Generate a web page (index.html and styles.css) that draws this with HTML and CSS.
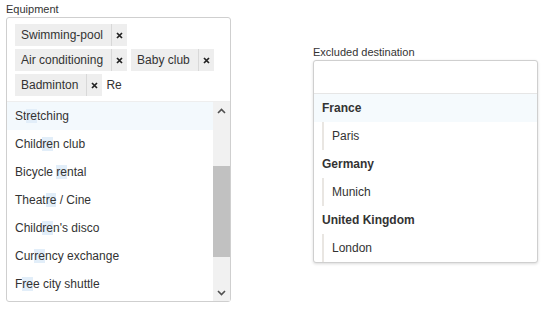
FILE: index.html
```html
<!DOCTYPE html>
<html lang="en">
<head>
    <meta charset="UTF-8">
    <title>Select widgets</title>
    <link rel="stylesheet" href="styles.css">
</head>
<body>
    <div class="field">
        <label class="field-label">Equipment</label>
        <div class="select-box">
            <div class="tags">
                <span class="tag"><span class="tag-text">Swimming-pool</span><span class="tag-remove"><svg width="7" height="7" viewBox="0 0 7 7"><path d="M1 1L6 6M6 1L1 6"/></svg></span></span>
                <span class="tag"><span class="tag-text">Air conditioning</span><span class="tag-remove"><svg width="7" height="7" viewBox="0 0 7 7"><path d="M1 1L6 6M6 1L1 6"/></svg></span></span>
                <span class="tag"><span class="tag-text">Baby club</span><span class="tag-remove"><svg width="7" height="7" viewBox="0 0 7 7"><path d="M1 1L6 6M6 1L1 6"/></svg></span></span>
                <span class="tag"><span class="tag-text">Badminton</span><span class="tag-remove"><svg width="7" height="7" viewBox="0 0 7 7"><path d="M1 1L6 6M6 1L1 6"/></svg></span></span>
                <span class="search-text">Re</span>
            </div>
            <div class="dropdown">
                <ul class="options">
                    <li class="option active">St<mark>re</mark>tching</li>
                    <li class="option">Child<mark>re</mark>n club</li>
                    <li class="option">Bicycle <mark>re</mark>ntal</li>
                    <li class="option">Theat<mark>re</mark> / Cine</li>
                    <li class="option">Child<mark>re</mark>n's disco</li>
                    <li class="option">Cur<mark>re</mark>ncy exchange</li>
                    <li class="option">F<mark>re</mark>e city shuttle</li>
                </ul>
                <div class="scrollbar">
                    <div class="scroll-btn"><svg width="9" height="6" viewBox="0 0 9 6"><path d="M1 5L4.5 1.5L8 5"/></svg></div>
                    <div class="scroll-track"><div class="scroll-thumb"></div></div>
                    <div class="scroll-btn"><svg width="9" height="6" viewBox="0 0 9 6"><path d="M1 1L4.5 4.5L8 1"/></svg></div>
                </div>
            </div>
        </div>
    </div>

    <div class="field field-right">
        <label class="field-label">Excluded destination</label>
        <div class="select-box select-open">
            <div class="search-input"></div>
            <ul class="groups">
                <li class="group-title active">France</li>
                <li class="group-item">Paris</li>
                <li class="group-title">Germany</li>
                <li class="group-item">Munich</li>
                <li class="group-title">United Kingdom</li>
                <li class="group-item">London</li>
            </ul>
        </div>
    </div>
</body>
</html>
```

FILE: styles.css
```css
* {
    margin: 0;
    padding: 0;
    box-sizing: border-box;
}

body {
    font-family: "Liberation Sans", Arial, sans-serif;
    font-size: 12px;
    color: #333;
    background: white;
    display: flex;
    align-items: flex-start;
    padding: 2px 6px;
}

.field {
    width: 225px;
}

.field-right {
    margin-left: 82px;
    margin-top: 43px;
}

.field-label {
    display: block;
    font-size: 11px;
    line-height: 14px;
    margin-bottom: 1px;
    color: #333;
}

.select-box {
    border: 1px solid #cfcfcf;
    border-radius: 3px;
    background: white;
}

.select-open {
    box-shadow: 0 1px 3px rgba(0,0,0,0.15);
}

/* tags */
.tags {
    display: flex;
    flex-wrap: wrap;
    align-items: center;
    gap: 3px 4px;
    padding: 6px 8px 5px;
    border-bottom: 1px solid #eee;
}

.tag {
    display: flex;
    height: 22px;
    background: #eeeeee;
    line-height: 22px;
}

.tag-text {
    padding: 0 8px 0 6px;
}

.tag-remove {
    width: 16px;
    border-left: 1px solid #d8d8d8;
    display: flex;
    align-items: center;
    justify-content: center;
}

.tag-remove path {
    stroke: #222;
    stroke-width: 1.7;
    fill: none;
}

.search-text {
    line-height: 22px;
}

/* dropdown list */
.dropdown {
    display: flex;
    height: 199px;
}

.options {
    list-style: none;
    flex: 1;
}

.option {
    height: 28px;
    line-height: 28px;
    padding-left: 8px;
}

.option.active {
    background: #f3f9fd;
}

mark {
    background: #e2eef9;
    color: inherit;
}

.scrollbar {
    width: 17px;
    background: #f1f1f1;
    display: flex;
    flex-direction: column;
}

.scroll-btn {
    height: 17px;
    display: flex;
    align-items: center;
    justify-content: center;
}

.scroll-btn path {
    stroke: #505050;
    stroke-width: 1.6;
    fill: none;
}

.scroll-track {
    flex: 1;
    padding-top: 47px;
}

.scroll-thumb {
    height: 91px;
    background: #c1c1c1;
}

/* grouped list */
.search-input {
    height: 33px;
    border-bottom: 1px solid #e6e6e6;
}

.groups {
    list-style: none;
}

.group-title {
    height: 28px;
    line-height: 28px;
    padding-left: 8px;
    font-weight: bold;
}

.group-title.active {
    background: #f5fafd;
}

.group-item {
    height: 28px;
    line-height: 28px;
    margin-left: 8px;
    padding-left: 8px;
    border-left: 2px solid #e9e6e2;
}
```
